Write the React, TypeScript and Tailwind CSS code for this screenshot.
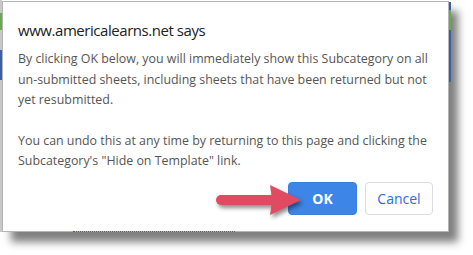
import React from "react";

const font = { fontFamily: '"Open Sans", "Noto Sans", Arial, sans-serif' };

const Arrow = () => (
  <svg
    className="absolute left-[208px] top-[178px] drop-shadow-[2px_3px_2px_rgba(0,0,0,0.45)]"
    width="100"
    height="44"
    viewBox="208 178 100 44"
  >
    <rect x="216" y="195" width="60" height="10" rx="5" fill="#e14b61" />
    <path d="M270 185 L301 200 L270 215 Q273 200 270 185 Z" fill="#e14b61" />
  </svg>
);

export default function App() {
  return (
    <div className="w-[473px] h-[255px] bg-white relative overflow-hidden" style={font}>
      {/* bits of the page behind the dialog */}
      <div className="absolute left-0 top-0 w-[2px] h-[232px] bg-[#c8c8c8]">
        <div className="mt-[13px] h-[17px] bg-[#6aa84f]" />
        <div className="mt-[20px] h-[30px] bg-[#3b5ea8]" />
      </div>
      <div className="absolute left-[449px] top-[2px] w-[2px] h-[80px] bg-[#3b5ea8]">
        <div className="mt-[8px] h-[20px] bg-[#6aa84f]" />
      </div>

      <div className="ml-[2px] mt-[1px] w-[447px] h-[231px] bg-white border border-[#b4b4b4] shadow-[9px_10px_8px_rgba(0,0,0,0.5)] flex flex-col px-[15px] pt-[17px] pb-[16px]">
        <div className="text-[15px] leading-[22px] text-[#202124] whitespace-nowrap tracking-[-0.45px]">
          www.americalearns.net says
        </div>
        <div className="mt-[8px] text-[12.4px] leading-[20.5px] text-[#575555] whitespace-nowrap">
          <p>
            By clicking OK below, you will immediately show this Subcategory on all
            <br />
            un-submitted sheets, including sheets that have been returned but not
            <br />
            yet resubmitted.
          </p>
          <p className="mt-[20px]">
            You can undo this at any time by returning to this page and clicking the
            <br />
            Subcategory's "Hide on Template" link.
          </p>
        </div>
        <div className="mt-auto flex justify-end gap-[8px]">
          <button className="w-[69px] h-[33px] rounded-[4px] bg-[#3d86e8] border border-[#3a7fdc] text-white text-[14px] font-bold">
            OK
          </button>
          <button className="w-[68px] h-[33px] rounded-[4px] bg-white border border-[#dadce0] text-[#2a6ee0] text-[14px]">
            Cancel
          </button>
        </div>
      </div>
      <div className="absolute left-[73px] top-[231px] w-[162px] border-b border-dotted border-[#5a5a7a]" />
      <Arrow />
    </div>
  );
}
